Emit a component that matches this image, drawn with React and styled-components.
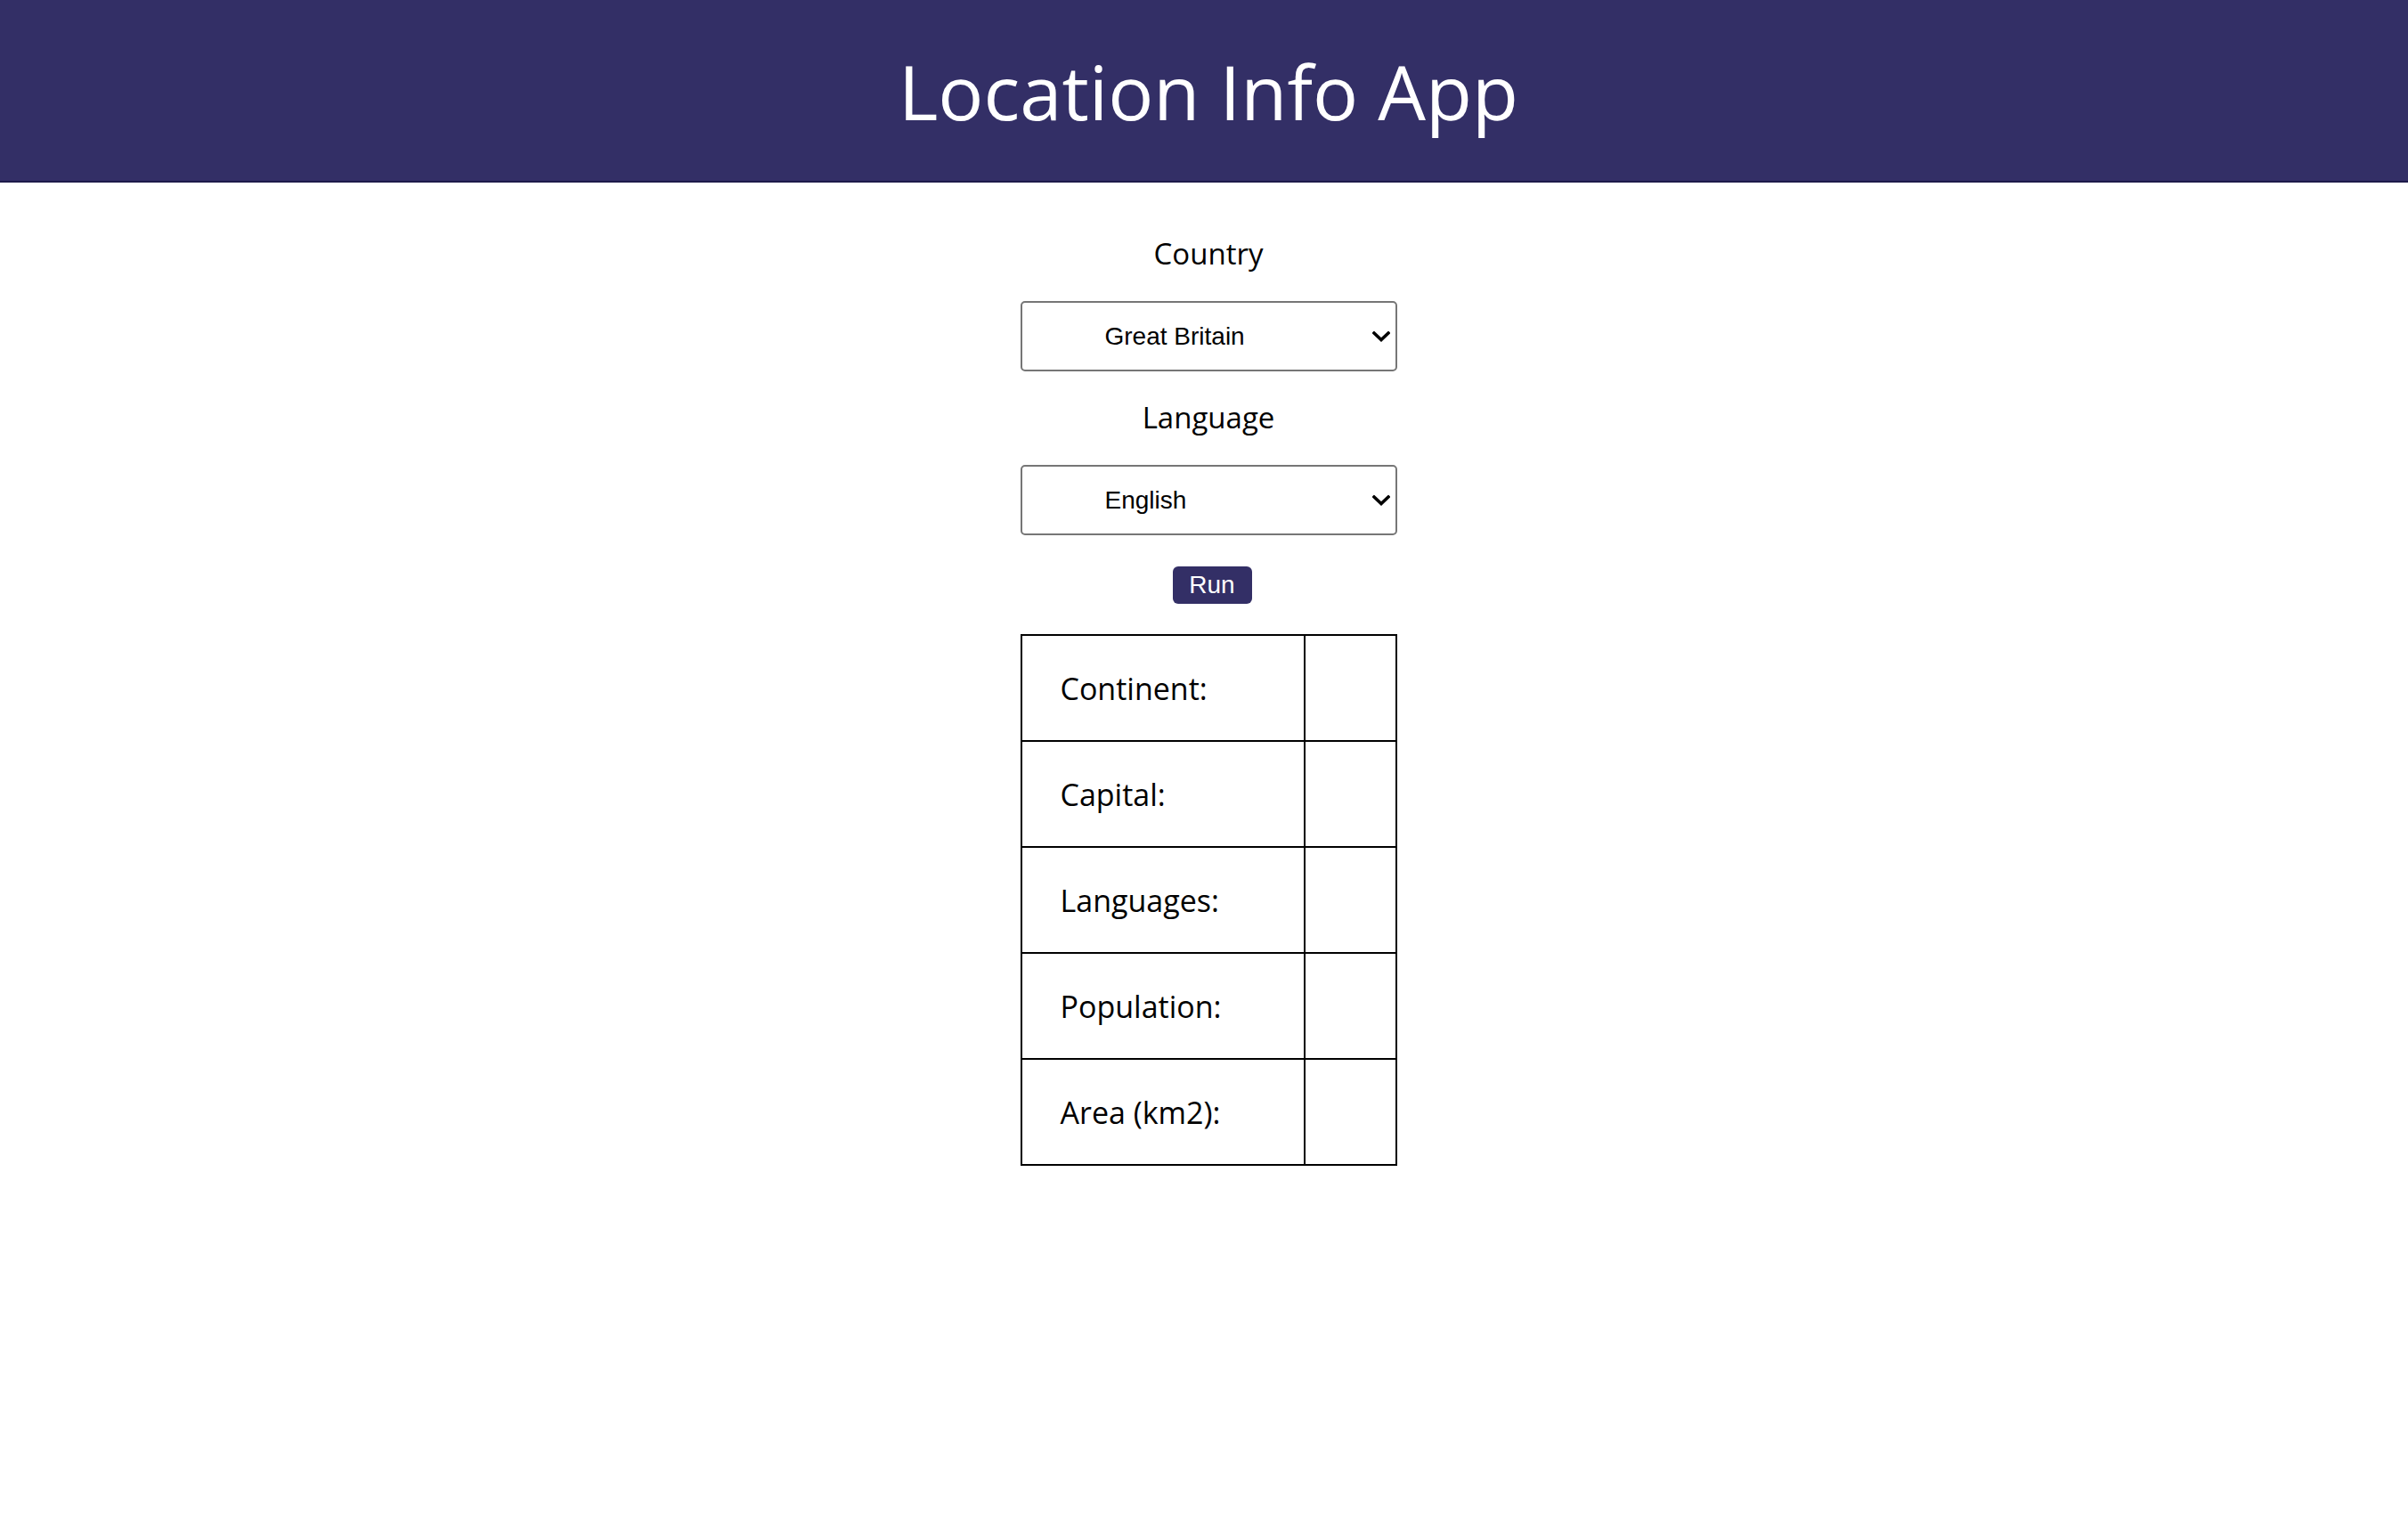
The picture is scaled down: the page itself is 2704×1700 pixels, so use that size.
import React, { useState } from 'react';
import styled, { createGlobalStyle } from 'styled-components';

const GlobalStyle = createGlobalStyle`
  body {
    margin: 0;
    background: #ffffff;
    font-family: "Open Sans", "Noto Sans", sans-serif;
    color: #000000;
  }
`;

const FIELDS = ['Continent:', 'Capital:', 'Languages:', 'Population:', 'Area (km2):'];

const Chevron = () => (
  <svg width="20" height="13" viewBox="0 0 20 13" fill="none">
    <path d="M2 2.5 L10 10 L18 2.5" stroke="#000" strokeWidth="3.6" strokeLinecap="square" />
  </svg>
);

const Dropdown = ({ value, onChange, options }) => (
  <SelectWrap>
    <Select value={value} onChange={e => onChange(e.target.value)}>
      {options.map(o => (
        <option key={o}>{o}</option>
      ))}
    </Select>
    <ArrowBox>
      <Chevron />
    </ArrowBox>
  </SelectWrap>
);

const App = () => {
  const [country, setCountry] = useState('Great Britain');
  const [language, setLanguage] = useState('English');

  return (
    <>
      <GlobalStyle />
      <Header>
        <Title>Location Info App</Title>
      </Header>
      <Main>
        <Label top="58px">Country</Label>
        <Dropdown
          value={country}
          onChange={setCountry}
          options={['Great Britain', 'France', 'Germany', 'Spain', 'Italy']}
        />
        <Label top="30px">Language</Label>
        <Dropdown
          value={language}
          onChange={setLanguage}
          options={['English', 'French', 'German', 'Spanish']}
        />
        <RunButton>Run</RunButton>
        <InfoTable>
          <tbody>
            {FIELDS.map(f => (
              <tr key={f}>
                <KeyCell>{f}</KeyCell>
                <ValueCell />
              </tr>
            ))}
          </tbody>
        </InfoTable>
      </Main>
    </>
  );
};

export default App;

const Header = styled.header`
  height: 203px;
  background-color: #332f66;
  border-bottom: 2px solid #1d1a4a;
  display: flex;
  align-items: center;
  justify-content: center;
  padding-left: 10px;
`;

const Title = styled.h1`
  margin: 0;
  font-family: "Open Sans", sans-serif;
  font-weight: 400;
  font-size: 85px;
  line-height: 114px;
  color: #ffffff;
`;

const Main = styled.main`
  display: flex;
  flex-direction: column;
  align-items: center;
  padding-left: 10px;
  padding-bottom: 80px;
`;

const Label = styled.div`
  margin-top: ${props => props.top};
  margin-bottom: 31px;
  font-size: 33px;
  line-height: 44px;
`;

const SelectWrap = styled.div`
  position: relative;
  width: 423px;
  height: 79px;
`;

const Select = styled.select`
  appearance: none;
  -webkit-appearance: none;
  box-sizing: border-box;
  width: 100%;
  height: 100%;
  margin: 0;
  padding: 0 40px 0 93px;
  border: 2px solid #767676;
  border-radius: 5px;
  background: #ffffff;
  color: #000000;
  font-family: "Liberation Sans", Arial, sans-serif;
  font-size: 28px;
  outline: none;
`;

const ArrowBox = styled.span`
  position: absolute;
  right: 8px;
  top: 50%;
  transform: translateY(-50%);
  display: flex;
  pointer-events: none;
`;

const RunButton = styled.button`
  margin: 35px 0 0 8px;
  width: 89px;
  height: 42px;
  padding: 0;
  border: none;
  border-radius: 6px;
  background-color: #332f66;
  color: #ffffff;
  font-family: "Liberation Sans", Arial, sans-serif;
  font-size: 28px;
  cursor: pointer;
`;

const InfoTable = styled.table`
  margin-top: 34px;
  width: 423px;
  border-collapse: collapse;
  border: 2px solid #000000;
`;

const KeyCell = styled.td`
  width: 318px;
  box-sizing: border-box;
  height: 119px;
  padding: 0 0 0 43px;
  border: 2px solid #000000;
  font-size: 34px;
  line-height: 44px;
  vertical-align: middle;
`;

const ValueCell = styled.td`
  border: 2px solid #000000;
`;
